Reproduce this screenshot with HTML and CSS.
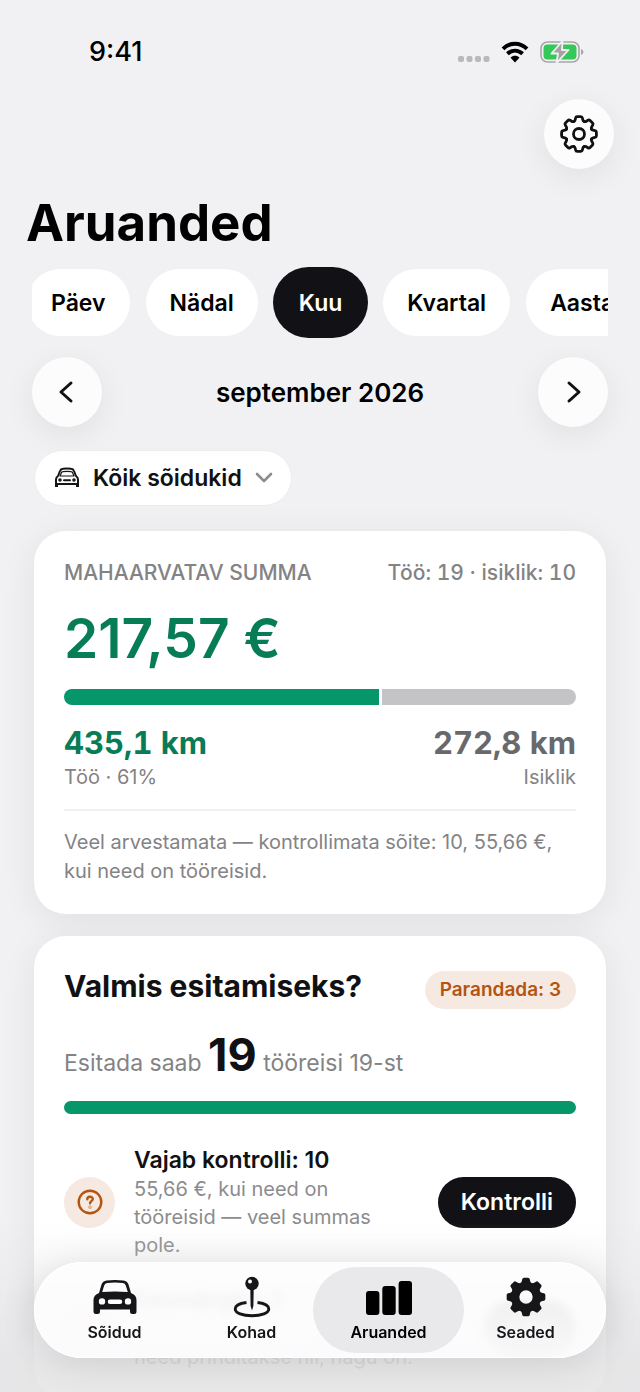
FILE: index.html
```html
<!DOCTYPE html>
<html lang="et">
<head>
<meta charset="utf-8">
<meta name="viewport" content="width=device-width, initial-scale=1">
<title>Aruanded</title>
<link rel="stylesheet" href="styles.css">
</head>
<body>
<svg class="defs" aria-hidden="true">
  <defs>
    <path id="tooth" d="M-5.2-12.4Q-4.1-12.9-3.8-14.2L-3.4-16Q-3.1-17.4-1.8-17.4L1.8-17.4Q3.1-17.4 3.4-16L3.8-14.2Q4.1-12.9 5.2-12.4"/>
    <g id="teeth">
      <use href="#tooth"/>
      <use href="#tooth" transform="rotate(45)"/>
      <use href="#tooth" transform="rotate(90)"/>
      <use href="#tooth" transform="rotate(135)"/>
      <use href="#tooth" transform="rotate(180)"/>
      <use href="#tooth" transform="rotate(225)"/>
      <use href="#tooth" transform="rotate(270)"/>
      <use href="#tooth" transform="rotate(315)"/>
    </g>
  </defs>
</svg>
<div class="app">
  <main class="content">
    <div class="status">
      <span class="time">9:41</span>
      <div class="indicators">
        <svg width="32" height="22" viewBox="0 0 32 22" fill="#b9b9bb"><rect x="0" y="15" width="6" height="6" rx="2"/><rect x="8.500" y="15" width="6" height="6" rx="2"/><rect x="17" y="15" width="6" height="6" rx="2"/><rect x="25.500" y="15" width="6" height="6" rx="2"/></svg>
        <svg width="28" height="22" viewBox="0 0 28 22" fill="none" stroke="#000" stroke-width="4"><path d="M2 7.800C9 .9 19 .9 26 7.800"/><path d="M6.400 12.700C11 8.600 17 8.600 21.600 12.700"/><path d="M9.600 16.800C12 14.200 16 14.200 18.400 16.800L14 21.400Z" fill="#000" stroke="none"/></svg>
        <svg width="44" height="22" viewBox="0 0 44 22"><rect x="1" y="1" width="38" height="20" rx="6.500" fill="none" stroke="#a9a7ab" stroke-width="1.600"/><rect x="3.500" y="3.500" width="33" height="15" rx="4" fill="#34c759"/><path d="M41 8Q43.500 9 43.500 11T41 14Z" fill="#a9a7ab"/><path d="M22.500 0L11.500 12.500H18L16.500 22L28.500 9H22Z" fill="#a9a0a6" stroke="#f1f1f3" stroke-width="1.800" stroke-linejoin="round"/></svg>
      </div>
    </div>
    <header class="head">
      <button class="round settings" aria-label="Seaded">
        <svg width="38" height="38" viewBox="-19 -19 38 38" fill="none" stroke="#111114" stroke-width="2.800" stroke-linecap="round"><use href="#teeth"/><circle r="5.500"/></svg>
      </button>
      <h1>Aruanded</h1>
    </header>
    <div class="chips">
      <button class="chip">Päev</button>
      <button class="chip">Nädal</button>
      <button class="chip active" aria-pressed="true">Kuu</button>
      <button class="chip">Kvartal</button>
      <button class="chip">Aasta</button>
    </div>
    <div class="period">
      <button class="round" aria-label="Eelmine kuu"><svg width="24" height="24" viewBox="0 0 24 24"><path d="M16 3L6 12L16 21"/></svg></button>
      <span class="month">september 2026</span>
      <button class="round" aria-label="Järgmine kuu"><svg width="24" height="24" viewBox="0 0 24 24"><path d="M8 3L18 12L8 21"/></svg></button>
    </div>
    <button class="filter">
      <svg width="26" height="22" viewBox="0 0 26 22" fill="none" stroke="#151517" stroke-width="2" stroke-linejoin="round"><path d="M2 17V12.500Q2 10.500 4 9L6 4Q6.700 2 9 1.800Q13 1.300 17 1.800Q19.300 2 20 4L22 9Q24 10.500 24 12.500V17Z"/><path d="M6 9L7.500 5.500Q7.900 4.700 9 4.600Q13 4.100 17 4.600Q18.100 4.700 18.500 5.500L20 9Z" stroke-width="1.200"/><path d="M2.500 17V20M23.500 17V20" stroke-width="3"/><path d="M10 13.200H16" stroke-linecap="round"/><circle cx="6" cy="13" r=".8"/><circle cx="20" cy="13" r=".8"/></svg>
      <span>Kõik sõidukid</span>
      <svg width="18" height="12" viewBox="0 0 18 12" fill="none" stroke="#8c8c8f" stroke-width="2.600" stroke-linecap="round" stroke-linejoin="round"><path d="M2 2L9 9L16 2"/></svg>
    </button>

    <section class="card">
      <div class="summary-head"><span>MAHAARVATAV SUMMA</span><span>Töö: 19 · isiklik: 10</span></div>
      <div class="amount">217,57 €</div>
      <div class="split"><span class="work" style="width:61.600%"></span><span class="private"></span></div>
      <div class="distances">
        <div><strong class="green">435,1 km</strong><span>Töö · 61%</span></div>
        <div class="right"><strong>272,8 km</strong><span>Isiklik</span></div>
      </div>
      <p class="pending">Veel arvestamata — kontrollimata sõite: 10, 55,66 €, kui need on tööreisid.</p>
    </section>

    <section class="card">
      <div class="ready-head"><h2>Valmis esitamiseks?</h2><span class="badge">Parandada: 3</span></div>
      <p class="ready">Esitada saab <strong>19</strong> tööreisi 19-st</p>
      <div class="progress"></div>
      <div class="task">
        <span class="task-icon"><svg width="26" height="26" viewBox="0 0 26 26" fill="none" stroke="#b4540f" stroke-width="2.400" stroke-linecap="round"><circle cx="13" cy="13" r="11.300"/><path d="M10.300 10.300C10.300 7 15.800 7 15.800 10.100C15.800 12.100 13 12.100 13 14.200"/><circle cx="13" cy="18" r=".3"/></svg></span>
        <div class="task-text"><h3>Vajab kontrolli: 10</h3><p>55,66 €, kui need on tööreisid — veel summas pole.</p></div>
        <button class="action">Kontrolli</button>
      </div>
      <div class="task second">
        <span class="task-icon"></span>
        <div class="task-text"><h3>Eesmärgita: 1</h3><p class="last-line">need prinditakse nii, nagu on.</p></div>
        <button class="action small">Lisa</button>
      </div>
    </section>
  </main>

  <div class="dock">
    <nav class="tabs">
      <a class="tab" href="#soidud">
        <svg width="46" height="38" viewBox="0 0 46 38"><path fill="#161618" fill-rule="evenodd" d="M7 15L9.500 6.500Q10.800 2.800 14.500 2.400Q23 1.500 31.500 2.400Q35.200 2.800 36.500 6.500L39 15Q44.500 17 44.500 22V33.500Q44.500 36 42 36H40.500Q38 36 38 33.500V31.500H8V33.500Q8 36 5.500 36H4Q1.500 36 1.500 33.500V22Q1.500 17 7 15ZM10.200 14Q23 12.800 35.800 14L33.900 7.700Q33.200 5.300 30.800 5Q23 4.200 15.200 5Q12.800 5.300 12.100 7.700ZM10 20.200A3.200 3.200 0 1 0 10 26.600A3.200 3.200 0 1 0 10 20.200ZM36 20.200A3.200 3.200 0 1 0 36 26.600A3.200 3.200 0 1 0 36 20.200ZM18 21.500A2 2 0 0 0 18 26H28A2 2 0 0 0 28 21.500Z"/></svg>
        <span>Sõidud</span>
      </a>
      <a class="tab" href="#kohad">
        <svg width="40" height="42" viewBox="0 0 40 42"><path d="M14.500 26.500C7 27.500 3.200 30 3.200 33C3.200 37 10.500 39.800 20 39.800S36.800 37 36.800 33C36.800 30 33 27.500 25.500 26.500" fill="none" stroke="#161618" stroke-width="2.900"/><path d="M18.300 12H21.700L21.400 30L20 34.500L18.600 30Z" fill="#161618"/><circle cx="20" cy="7.500" r="6.700" fill="#161618"/><circle cx="18" cy="5.600" r="2" fill="#fff"/></svg>
        <span>Kohad</span>
      </a>
      <a class="tab current" href="#aruanded" aria-current="page">
        <svg width="48" height="38" viewBox="0 0 48 38" fill="#000"><rect x="1" y="13" width="13.400" height="24" rx="3"/><rect x="17.300" y="8" width="13.400" height="29" rx="3"/><rect x="33.600" y="3" width="13.400" height="34" rx="3"/></svg>
        <span>Aruanded</span>
      </a>
      <a class="tab" href="#seaded">
        <svg width="40" height="40" viewBox="-18 -18 36 36" fill="#161618"><use href="#teeth"/><circle r="9.800" fill="none" stroke="#161618" stroke-width="7.600"/></svg>
        <span>Seaded</span>
      </a>
    </nav>
  </div>
</div>
</body>
</html>
```
FILE: styles.css
```css
* { box-sizing: border-box; }
body {
  margin: 0;
  background: #f1f1f3;
  color: #111114;
  font-family: Inter, "Open Sans", sans-serif;
}
h1, h2, h3, p { margin: 0; }
button { border: 0; padding: 0; font: inherit; color: inherit; cursor: pointer; }
svg { display: block; flex: none; }
.defs { position: absolute; width: 0; height: 0; }

.app { height: 100vh; overflow: hidden; }
.content {
  display: flex;
  flex-direction: column;
  height: 100%;
  padding: 0 34px;
  overflow-y: auto;
  scrollbar-width: none;
}
.content > * { flex: none; }

.status {
  display: flex;
  justify-content: space-between;
  align-items: center;
  height: 99px;
  margin: 0 22px 0 55px;
  padding-top: 4px;
  color: #000;
}
.time { font-size: 27px; font-weight: 500; line-height: 32px; }
.indicators { display: flex; gap: 11px; }

.round {
  display: grid;
  place-items: center;
  width: 70px;
  height: 70px;
  border-radius: 50%;
  background: #fcfcfd;
  box-shadow: 0 8px 32px rgba(0, 0, 0, .07);
}
.settings { margin: 0 -8px 0 auto; }
.head h1 {
  margin: 22px 0 0 -8px;
  color: #000;
  font-size: 51px;
  font-weight: 700;
  line-height: 64px;
}

.chips {
  display: flex;
  align-items: center;
  gap: 16px;
  height: 71px;
  margin: 12px -2px 0;
  overflow: hidden;
}
.chip {
  flex: none;
  height: 67px;
  padding: 0 24px;
  border-radius: 34px;
  background: #fff;
  color: #000;
  font-size: 23px;
  font-weight: 600;
}
.chip:first-child { margin-left: -5px; }
.chip.active { height: 71px; margin: 0 -1px; padding: 0 26px; border-radius: 36px; background: #111116; color: #fff; }

.period {
  display: flex;
  align-items: center;
  justify-content: space-between;
  margin: 19px -2px 0;
}
.period svg { fill: none; stroke: #111114; stroke-width: 3; stroke-linecap: round; stroke-linejoin: round; }
.month { color: #000; font-size: 26px; font-weight: 600; }

.filter {
  display: flex;
  align-items: center;
  align-self: flex-start;
  gap: 13px;
  height: 56px;
  margin-top: 23px;
  padding: 0 18px 0 19px;
  border: 1px solid #ececee;
  border-radius: 28px;
  background: #fff;
  font-size: 23px;
  font-weight: 600;
}

.card {
  margin-top: 22px;
  padding: 30px 30px 28px;
  border-radius: 32px;
  background: #fff;
  box-shadow: 0 6px 36px rgba(0, 0, 0, .07);
}
.filter + .card { margin-top: 25px; }
.summary-head {
  display: flex;
  justify-content: space-between;
  color: #838385;
  font-size: 21px;
  font-weight: 500;
  font-variant-numeric: tabular-nums;
  line-height: 24px;
}
.amount {
  margin-top: 21px;
  color: #067c57;
  font-size: 55px;
  font-weight: 600;
  line-height: 64px;
}
.split { display: flex; gap: 3px; height: 16px; margin-top: 19px; border-radius: 8px; overflow: hidden; }
.work { flex: none; background: #059669; }
.private { flex: 1; background: #c4c4c6; }
.distances { display: flex; justify-content: space-between; margin-top: 19px; }
.distances strong {
  display: block;
  color: #69696b;
  font-size: 31px;
  font-weight: 700;
  font-variant-numeric: tabular-nums;
  line-height: 38px;
}
.distances .green { color: #067c57; }
.distances span { display: block; color: #838385; font-size: 20px; line-height: 30px; }
.right { text-align: right; }
.pending {
  margin-top: 17px;
  padding-top: 17px;
  border-top: 2px solid #f1f1f2;
  color: #838385;
  font-size: 20px;
  line-height: 29px;
}

.ready-head { display: flex; justify-content: space-between; align-items: flex-end; height: 43px; }
.ready-head h2 { align-self: flex-start; font-size: 30px; font-weight: 700; line-height: 40px; }
.badge {
  padding: 0 15px;
  border-radius: 19px;
  background: #f6e9e2;
  color: #b4540f;
  font-size: 19px;
  font-weight: 600;
  line-height: 38px;
}
.ready { margin-top: 18px; color: #838385; font-size: 23px; line-height: 28px; }
.ready strong { color: #111114; font-size: 45px; font-weight: 700; line-height: 56px; }
.progress { height: 13px; margin-top: 18px; border-radius: 7px; background: #059669; }
.task { display: flex; align-items: center; margin-top: 31px; }
.task-icon {
  display: grid;
  flex: none;
  place-items: center;
  width: 51px;
  height: 51px;
  border-radius: 50%;
  background: #f6e9e2;
}
.task-text { flex: 1; padding: 0 30px 0 19px; }
.task h3 { font-size: 23px; font-weight: 600; line-height: 30px; }
.task p { color: #8c8c8e; font-size: 20px; line-height: 28px; }
.action {
  flex: none;
  height: 51px;
  padding: 0 23px;
  border-radius: 26px;
  background: #111116;
  color: #fff;
  font-size: 23px;
  font-weight: 600;
}
.second { margin-top: 26px; }
.second .task-text { padding-right: 0; }
.second .task-icon { background: #ffd9bd; }
.last-line { padding-top: 28px; }
.small { height: 56px; border-radius: 28px; }

.dock {
  position: fixed;
  inset: auto 0 0;
  padding: 40px 34px 34px;
  background: linear-gradient(rgba(228, 228, 230, 0), rgba(228, 228, 230, .3) 32%, rgba(228, 228, 230, .85) 80%);
}
.tabs {
  display: flex;
  height: 96px;
  padding: 5px 12px;
  border-radius: 48px;
  background: rgba(253, 253, 254, .91);
  backdrop-filter: blur(4px);
  box-shadow: 0 4px 36px rgba(0, 0, 0, .12), inset 0 0 0 1px #fff;
}
.tab {
  position: relative;
  display: flex;
  flex: 1;
  flex-direction: column;
  align-items: center;
  justify-content: flex-end;
  padding: 5px 0 11px;
  color: #161618;
  font-size: 16px;
  font-weight: 600;
  line-height: 20px;
  text-decoration: none;
}
.tab svg { margin: auto 0; }
.tab svg, .tab span { position: relative; }
.current { color: #000; }
.current::before {
  content: "";
  position: absolute;
  inset: 0 -7px;
  border-radius: 43px;
  background: #e9e9eb;
}
```
